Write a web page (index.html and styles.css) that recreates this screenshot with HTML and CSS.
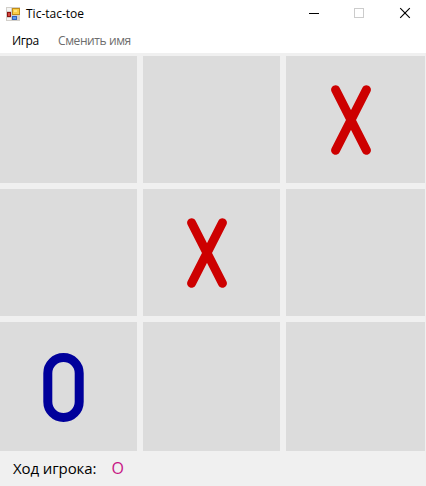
FILE: index.html
```html
<!DOCTYPE html>
<html lang="ru">
<head>
<meta charset="utf-8">
<title>Tic-tac-toe</title>
<link rel="stylesheet" href="styles.css">
</head>
<body>
<div class="window">
  <header class="titlebar">
    <svg class="app-icon" width="14" height="14" viewBox="0 0 14 14" shape-rendering="crispEdges">
      <rect width="14" height="14" fill="#d2cfca"/>
      <rect x="1" y="1" width="4" height="3" fill="#f4f4f2"/>
      <rect x="1" y="11" width="4" height="2" fill="#f4f4f2"/>
      <rect x="6" y="1" width="8" height="7" fill="#c08c1c"/>
      <rect x="7" y="2" width="6" height="5" fill="#f9cd45"/>
      <rect x="8" y="3" width="3" height="2" fill="#ffe27a"/>
      <rect x="1" y="5" width="4" height="5" fill="#8d1412"/>
      <rect x="2" y="6" width="2" height="3" fill="#d5473e"/>
      <rect x="6" y="9" width="5" height="4" fill="#2e62bd"/>
      <rect x="7" y="10" width="3" height="2" fill="#5e98ed"/>
    </svg>
    <span class="title">Tic-tac-toe</span>
    <div class="controls">
      <svg width="46" height="27" viewBox="0 0 46 27"><path d="M19 13.5h10" stroke="#000"/></svg>
      <svg width="46" height="27" viewBox="0 0 46 27"><rect x="18.5" y="8.5" width="9" height="9" fill="none" stroke="#ccc"/></svg>
      <svg width="46" height="27" viewBox="0 0 46 27"><path d="M18.2 8.2l9.6 9.6M27.8 8.2l-9.6 9.6" stroke="#000" stroke-width="1.15"/></svg>
    </div>
  </header>
  <nav class="menu">
    <span class="item game">Игра</span>
    <span class="item rename">Сменить имя</span>
  </nav>
  <main class="board">
    <div class="cell"></div>
    <div class="cell"></div>
    <div class="cell"><svg class="mark cross" width="40" height="70" viewBox="0 0 40 70"><path d="M4.6 4.7L35.4 65.3M35.4 4.7L4.6 65.3"/></svg></div>
    <div class="cell"></div>
    <div class="cell"><svg class="mark cross center" width="40" height="70" viewBox="0 0 40 70"><path d="M4.6 4.7L35.4 65.3M35.4 4.7L4.6 65.3"/></svg></div>
    <div class="cell"></div>
    <div class="cell"><svg class="mark nought" width="41" height="69" viewBox="0 0 41 69"><rect x="4.8" y="4.5" width="31.4" height="60" rx="15.7"/></svg></div>
    <div class="cell"></div>
    <div class="cell"></div>
  </main>
  <footer class="status">
    <span class="label">Ход игрока:</span>
    <span class="player">O</span>
  </footer>
</div>
</body>
</html>
```
FILE: styles.css
```css
body {
  margin: 0;
  font-family: "Open Sans", "Noto Sans", sans-serif;
}

.window {
  width: 426px;
  height: 486px;
  overflow: hidden;
  background: #f0f0f0;
}

.titlebar {
  display: flex;
  align-items: center;
  height: 27px;
  padding-left: 6px;
  background: #fff;
}

.app-icon {
  flex: none;
}

.title {
  margin-left: 6px;
  font-size: 12px;
  line-height: 27px;
}

.controls {
  display: flex;
  margin-left: auto;
  margin-right: -2px;
}

.menu {
  display: flex;
  box-sizing: border-box;
  height: 26px;
  padding: 1px 0 0 12px;
  background: #fff;
  font-size: 12px;
  line-height: 26px;
}

.item {
  letter-spacing: -0.4px;
  white-space: nowrap;
}

.game {
  width: 46px;
}

.rename {
  color: #6d6d6d;
}

.board {
  display: grid;
  grid-template-columns: 137px 137px 139px;
  grid-template-rows: 127px 127px 129px;
  gap: 6px;
  padding-top: 3px;
}

.cell {
  background: #dcdcdc;
}

.mark {
  display: block;
  fill: none;
}

.cross {
  margin: 29px 0 0 44.5px;
  stroke: #cd0000;
  stroke-width: 9;
  stroke-linecap: round;
}

.center {
  margin-left: 43.5px;
}

.nought {
  margin: 31px 0 0 43px;
  stroke: #00009b;
  stroke-width: 9;
}

.status {
  display: flex;
  height: 35px;
  padding-left: 13px;
  font-size: 15px;
  line-height: 35px;
}

.label {
  width: 98.5px;
  letter-spacing: -0.1px;
  white-space: nowrap;
}

.player {
  color: #c71585;
  font-size: 16px;
}
```
